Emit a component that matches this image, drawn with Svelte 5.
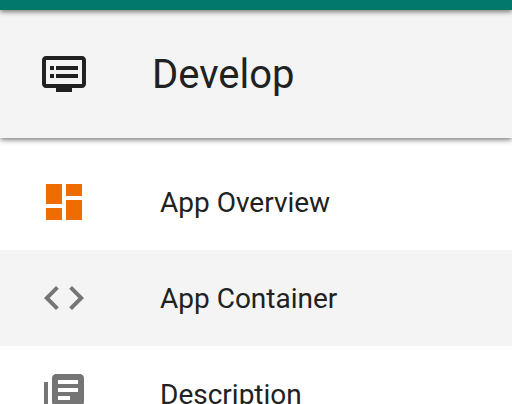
<script>
  const items = [
    { label: 'App Overview', color: '#ef6c00', path: 'M3 13h8V3H3v10zm0 8h8v-6H3v6zm10 0h8V11h-8v10zm0-18v6h8V3h-8z' },
    { label: 'App Container', color: '#757575', selected: true, path: 'M9.4 16.6L4.8 12l4.6-4.6L8 6l-6 6 6 6 1.4-1.4zm5.2 0l4.6-4.6-4.6-4.6L16 6l6 6-6 6-1.4-1.4z' },
    { label: 'Description', color: '#757575', path: 'M4 6H2v14c0 1.1.9 2 2 2h14v-2H4V6zm16-4H8c-1.1 0-2 .9-2 2v12c0 1.1.9 2 2 2h12c1.1 0 2-.9 2-2V4c0-1.1-.9-2-2-2zm-1 9H9V9h10v2zm-4 4H9v-2h6v2zm4-8H9V5h10v2z' }
  ];
</script>

<div class="screen">
  <div class="status"></div>
  <header>
    <svg viewBox="0 0 24 24" fill="#212121">
      <path d="M21 3H3c-1.1 0-2 .9-2 2v12c0 1.1.9 2 2 2h5v2h8v-2h5c1.1 0 1.99-.9 1.99-2L23 5c0-1.1-.9-2-2-2zm0 14H3V5h18v12zm-2-9H8v2h11V8zm0 4H8v2h11v-2zM7 8H5v2h2V8zm0 4H5v2h2v-2z" />
    </svg>
    <h1>Develop</h1>
  </header>
  <nav>
    {#each items as item}
      <div class="item" class:selected={item.selected}>
        <svg viewBox="0 0 24 24" fill={item.color}><path d={item.path} /></svg>
        <span>{item.label}</span>
      </div>
    {/each}
  </nav>
</div>

<style>
  .screen {
    width: 512px;
    height: 404px;
    overflow: hidden;
    background: #fff;
    color: #212121;
    font-family: Roboto, sans-serif;
  }
  .status {
    position: relative;
    z-index: 2;
    height: 10px;
    background: #00796b;
    box-shadow: 0 2px 5px rgba(0, 0, 0, 0.5);
  }
  header {
    position: relative;
    z-index: 1;
    display: flex;
    align-items: center;
    height: 128px;
    padding-left: 40px;
    box-sizing: border-box;
    background: #f4f4f4;
    box-shadow: 0 2px 5px rgba(0, 0, 0, 0.5);
  }
  svg {
    flex: none;
    width: 48px;
    height: 48px;
  }
  h1 {
    margin: 0 0 0 64px;
    padding-top: 2px;
    font-size: 40px;
    line-height: 48px;
    font-weight: 400;
  }
  nav {
    padding-top: 16px;
  }
  .item {
    display: flex;
    align-items: center;
    height: 96px;
    padding-left: 40px;
    box-sizing: border-box;
  }
  .selected {
    background: #f4f4f4;
  }
  span {
    margin-left: 72px;
    padding-top: 2px;
    font-size: 28px;
    line-height: 40px;
    white-space: nowrap;
  }
</style>
